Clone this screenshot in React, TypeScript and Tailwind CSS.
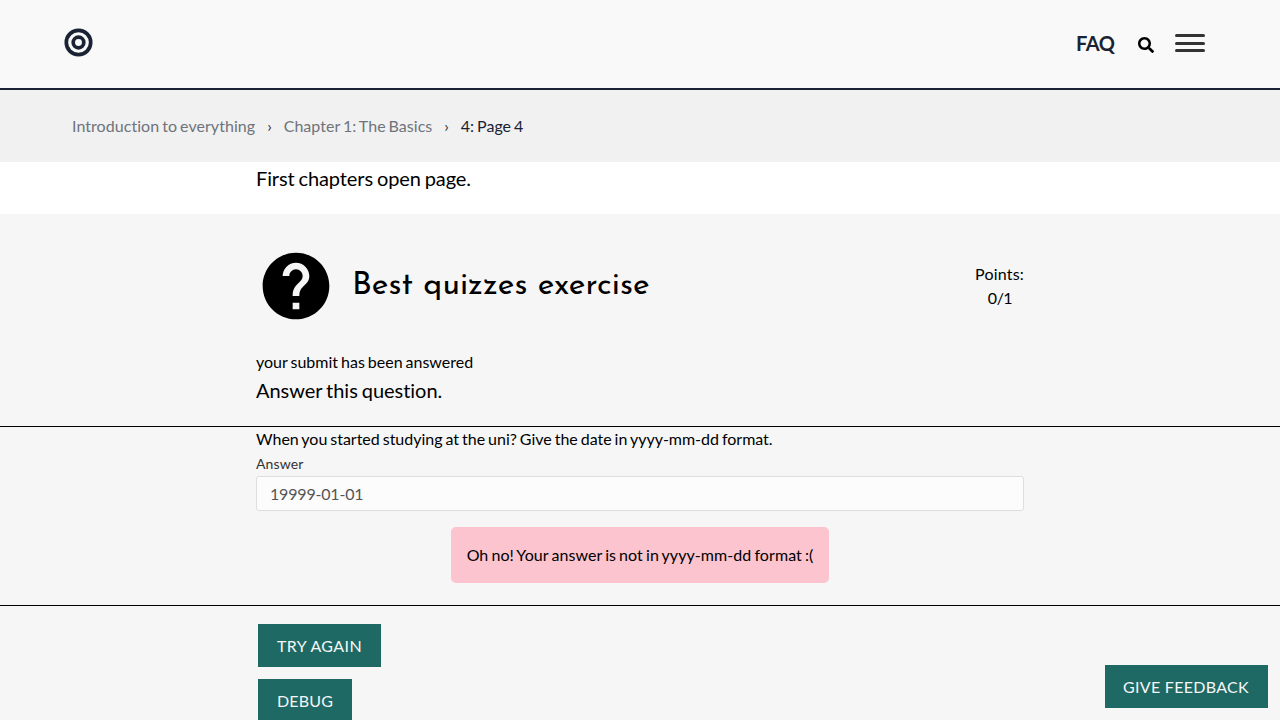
import { FaSearch } from "react-icons/fa";
import { MdHelp } from "react-icons/md";

function Header() {
  return (
    <header className="flex h-[90px] items-start border-b-2 border-[#1a2333] bg-[#f9f9f9] pl-16 pr-[75px]">
      <svg className="mt-7 size-[29px]" viewBox="0 0 29 29" fill="none" stroke="#1a2333">
        <circle cx="14.5" cy="14.5" r="12.2" strokeWidth="3.7" />
        <circle cx="14.5" cy="14.5" r="5.3" strokeWidth="3.7" />
      </svg>
      <nav className="ml-auto flex">
        <a className="mt-[27px] w-[39px] text-xl leading-8 font-bold tracking-[-0.4px] whitespace-nowrap text-[#1a2333]">FAQ</a>
        <FaSearch className="mt-[37px] ml-[23px] size-4 text-black" />
        <div className="mt-[34px] ml-[21px] flex w-[30px] flex-col gap-[4.5px]">
          <span className="h-[3px] rounded-sm bg-[#333]" />
          <span className="h-[3px] rounded-sm bg-[#333]" />
          <span className="h-[3px] rounded-sm bg-[#333]" />
        </div>
      </nav>
    </header>
  );
}

function Breadcrumbs() {
  return (
    <nav className="flex h-[72px] items-center bg-[#f1f1f1] pl-[72px] text-base text-[#6f737b]">
      <span className="tracking-[0.05px]">Introduction to everything</span>
      <span className="mx-3 text-[#333]">›</span>
      <span className="tracking-[0.03px]">Chapter 1: The Basics</span>
      <span className="mx-3 text-[#333]">›</span>
      <span className="text-[#1a2333]">4: Page 4</span>
    </nav>
  );
}

export default function App() {
  return (
    <div className="h-[720px] overflow-hidden bg-[#f6f6f6] font-['Lato',sans-serif] text-base text-black [font-variant-ligatures:no-common-ligatures] [word-spacing:-0.07em]">
      <Header />
      <Breadcrumbs />
      <div className="h-[52px] bg-white">
        <p className="mx-auto w-[768px] text-xl leading-8 tracking-[-0.1px]">First chapters open page.</p>
      </div>
      <section>
        <div className="mx-auto h-[212px] w-[768px] pt-8">
          <div className="flex h-20 items-center">
            <MdHelp className="size-20" />
            <h2 className="ml-4 font-['Josefin_Sans','Lato',sans-serif] text-[32px] leading-10 tracking-[0.06px] whitespace-nowrap [word-spacing:normal]">
              Best quizzes exercise
            </h2>
            <div className="ml-auto text-center leading-6">
              <div className="tracking-[0.2px]">Points:</div>
              <div className="pl-px tracking-[-0.5px]">0/1</div>
            </div>
          </div>
          <p className="mt-6 leading-6">your submit has been answered</p>
          <p className="text-xl leading-8 tracking-[-0.03px]">Answer this question.</p>
        </div>
        <div className="h-[180px] border-y border-black">
          <div className="mx-auto flex w-[768px] flex-col">
            <p className="leading-6 tracking-[-0.01px]">When you started studying at the uni? Give the date in yyyy-mm-dd format.</p>
            <label className="mb-0.5 pt-0.5 text-sm leading-[21px] tracking-[0.15px] text-[#333]">Answer</label>
            <input
              className="h-[35px] rounded-[3px] border border-[#dedede] bg-[#fcfcfc] px-[13px] text-base tracking-[-0.18px] text-[#555] outline-none"
              defaultValue="19999-01-01"
            />
            <div className="mt-4 self-center rounded-[5px] bg-[#fcc4ce] p-4 leading-6 tracking-[0.075px] whitespace-nowrap">
              Oh no! Your answer is not in yyyy-mm-dd format :(
            </div>
          </div>
        </div>
        <div className="mx-auto flex w-[768px] flex-col items-start gap-3 pt-[18px] pl-0.5 [word-spacing:normal]">
          <button className="h-[43px] w-[123px] bg-[#1f6964] text-base tracking-[0.4px] text-[#f5f6f7]">TRY AGAIN</button>
          <button className="h-[43px] w-[94px] bg-[#1f6964] text-base tracking-[0.2px] text-[#f5f6f7]">DEBUG</button>
        </div>
      </section>
      <button className="fixed right-3 bottom-3 h-[43px] w-[163px] bg-[#1f6964] pr-px text-base tracking-[0.3px] whitespace-nowrap text-[#f5f6f7] [word-spacing:normal]">
        GIVE FEEDBACK
      </button>
    </div>
  );
}
